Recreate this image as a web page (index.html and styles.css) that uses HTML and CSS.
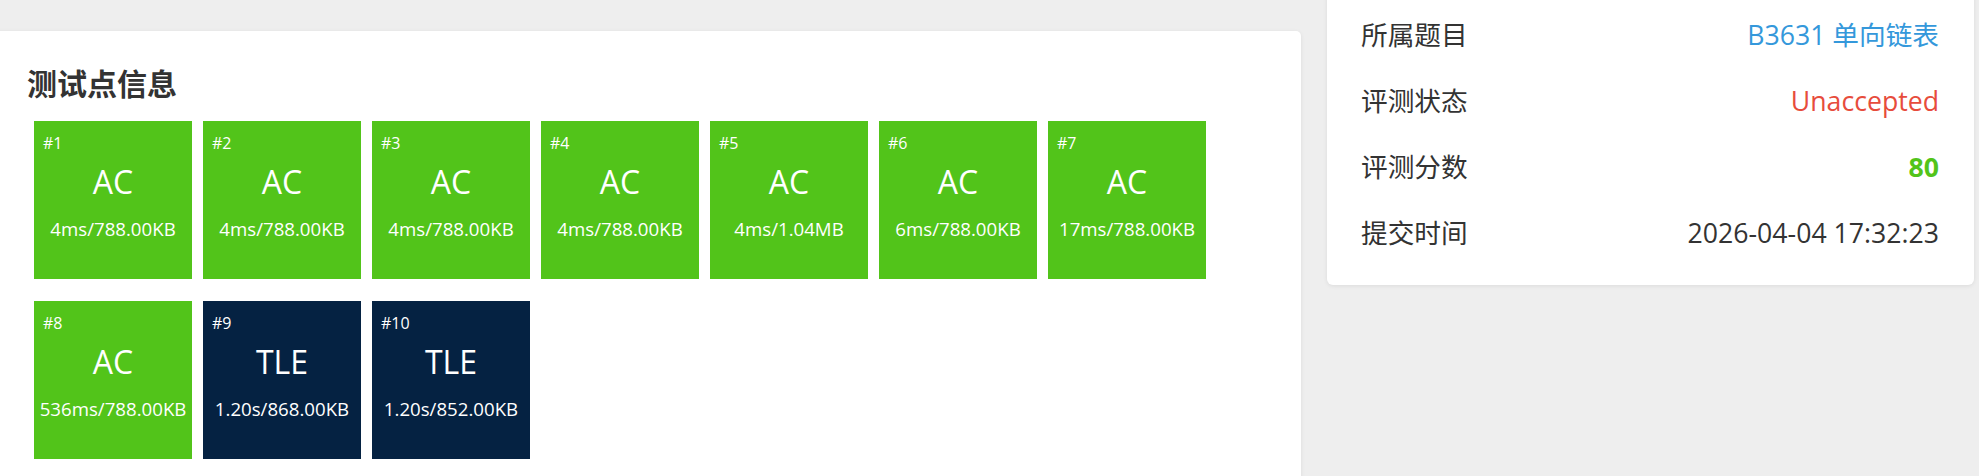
FILE: index.html
```html
<!DOCTYPE html>
<html lang="zh-CN">
<head>
<meta charset="utf-8">
<title>测试点信息</title>
<link rel="stylesheet" href="styles.css">
</head>
<body>
<div class="page">
  <div class="main">
    <section class="card cases">
      <h2 class="title">测试点信息</h2>
      <div class="grid">
        <div class="case ac"><div class="id">#1</div><div class="st">AC</div><div class="meta">4ms/788.00KB</div></div>
        <div class="case ac"><div class="id">#2</div><div class="st">AC</div><div class="meta">4ms/788.00KB</div></div>
        <div class="case ac"><div class="id">#3</div><div class="st">AC</div><div class="meta">4ms/788.00KB</div></div>
        <div class="case ac"><div class="id">#4</div><div class="st">AC</div><div class="meta">4ms/788.00KB</div></div>
        <div class="case ac"><div class="id">#5</div><div class="st">AC</div><div class="meta">4ms/1.04MB</div></div>
        <div class="case ac"><div class="id">#6</div><div class="st">AC</div><div class="meta">6ms/788.00KB</div></div>
        <div class="case ac"><div class="id">#7</div><div class="st">AC</div><div class="meta">17ms/788.00KB</div></div>
        <div class="case ac"><div class="id">#8</div><div class="st">AC</div><div class="meta">536ms/788.00KB</div></div>
        <div class="case tle"><div class="id">#9</div><div class="st">TLE</div><div class="meta">1.20s/868.00KB</div></div>
        <div class="case tle"><div class="id">#10</div><div class="st">TLE</div><div class="meta">1.20s/852.00KB</div></div>
      </div>
    </section>
  </div>
  <aside class="side">
    <div class="card info">
      <div class="row"><span class="k">所属题目</span><span class="v link">B3631 单向链表</span></div>
      <div class="row"><span class="k">评测状态</span><span class="v bad">Unaccepted</span></div>
      <div class="row"><span class="k">评测分数</span><span class="v score">80</span></div>
      <div class="row"><span class="k">提交时间</span><span class="v">2026-04-04 17:32:23</span></div>
    </div>
  </aside>
</div>
</body>
</html>
```

FILE: styles.css
```css
html, body {
  margin: 0;
  padding: 0;
  background: #eeeeee;
  overflow: hidden;
}

body {
  font-family: "Open Sans", "Noto Sans CJK SC", sans-serif;
  color: #333333;
}

.page {
  display: flex;
  align-items: flex-start;
  gap: 26px;
  padding-right: 5px;
}

.main {
  width: 1301px;
  flex: none;
  padding-top: 31px;
}

.card {
  background: #ffffff;
  border-radius: 5px;
  box-shadow: 0 1px 4px rgba(0, 0, 0, 0.08);
}

.cases {
  margin-left: -10px;
  padding: 32px 28px 60px 37px;
}

.title {
  margin: 0;
  font-size: 30px;
  line-height: 41px;
  font-weight: 700;
  color: #333333;
}

.grid {
  margin-top: 17px;
  margin-left: 7px;
  display: flex;
  flex-wrap: wrap;
  column-gap: 11px;
  row-gap: 22px;
}

.case {
  width: 158px;
  height: 158px;
  box-sizing: border-box;
  padding: 11px 9px 0;
  color: #ffffff;
}

.case.ac {
  background: #52c41a;
}

.case.tle {
  background: #052242;
}

.id {
  font-size: 16px;
  line-height: 22px;
}

.st {
  margin-top: 6px;
  font-size: 32px;
  line-height: 44px;
  text-align: center;
}

.meta {
  margin-top: 13px;
  margin-left: -6px;
  margin-right: -6px;
  font-size: 18.67px;
  line-height: 24px;
  text-align: center;
  white-space: nowrap;
}

.side {
  width: 647px;
  flex: none;
}

.info {
  margin-top: -12px;
  border-radius: 6px;
  padding: 14px 35px 19px 34px;
}

.row {
  height: 66px;
  display: flex;
  align-items: center;
  justify-content: space-between;
  font-size: 26.67px;
  line-height: 36px;
}

.k {
  color: #333333;
}

.v {
  color: #333333;
}

.v.link {
  color: #3498db;
}

.v.bad {
  color: #e74c3c;
}

.v.score {
  color: #52c41a;
  font-weight: 700;
}
```
